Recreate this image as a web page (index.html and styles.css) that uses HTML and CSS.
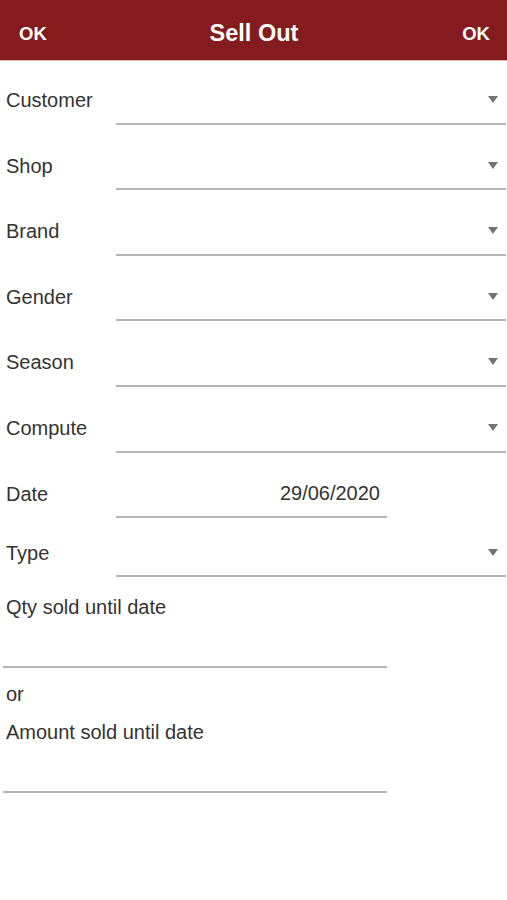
FILE: index.html
```html
<!DOCTYPE html>
<html>
<head>
<meta charset="utf-8">
<link rel="stylesheet" href="styles.css">
</head>
<body>
<header class="topbar">
  <span class="btn">OK</span>
  <span class="title">Sell Out</span>
  <span class="btn">OK</span>
</header>
<main class="form">
  <div class="row"><span class="label">Customer</span><div class="field"><span class="caret"></span></div></div>
  <div class="row"><span class="label">Shop</span><div class="field"><span class="caret"></span></div></div>
  <div class="row"><span class="label">Brand</span><div class="field"><span class="caret"></span></div></div>
  <div class="row"><span class="label">Gender</span><div class="field"><span class="caret"></span></div></div>
  <div class="row"><span class="label">Season</span><div class="field"><span class="caret"></span></div></div>
  <div class="row"><span class="label">Compute</span><div class="field"><span class="caret"></span></div></div>
  <div class="row"><span class="label">Date</span><div class="field date"><span class="value">29/06/2020</span></div></div>
  <div class="row short"><span class="label">Type</span><div class="field"><span class="caret"></span></div></div>
  <div class="block">
    <div class="text first">Qty sold until date</div>
    <div class="input"></div>
    <div class="text">or</div>
    <div class="text">Amount sold until date</div>
    <div class="input"></div>
  </div>
</main>
</body>
</html>
```
FILE: styles.css
```css
html, body {
  margin: 0;
  padding: 0;
  background: #ffffff;
  font-family: "Liberation Sans", Arial, sans-serif;
  color: #333333;
}

.topbar {
  height: 53px;
  padding: 7px 17px 0 19px;
  border-bottom: 1px solid #e2b4b4;
  background: #841c1f;
  color: #ffffff;
  display: flex;
  align-items: center;
  justify-content: space-between;
}

.btn {
  font-size: 18.5px;
  font-weight: bold;
}

.title {
  font-size: 23.5px;
  font-weight: bold;
  margin-right: 1px;
}

.form {
  display: flex;
  flex-direction: column;
}

.row {
  display: flex;
  align-items: flex-end;
  height: 65.6px;
  padding-bottom: 2px;
  box-sizing: border-box;
}

.row.short {
  height: 59px;
}

.label {
  width: 116px;
  flex: none;
  box-sizing: border-box;
  padding-left: 6px;
  font-size: 20px;
  line-height: 24px;
  margin-bottom: 12.5px;
}

.field {
  flex: 1;
  height: 46px;
  border-bottom: 2px solid #b5b5b5;
  margin-right: 1px;
  display: flex;
  align-items: center;
  justify-content: flex-end;
  padding-right: 8px;
}

.caret {
  width: 0;
  height: 0;
  border-left: 5.5px solid transparent;
  border-right: 5.5px solid transparent;
  border-top: 7px solid #737373;
}

.field.date {
  flex: none;
  width: 271px;
  padding-right: 7px;
  box-sizing: border-box;
  height: 48px;
}

.value {
  font-size: 20px;
  line-height: 24px;
  color: #333333;
}

.block {
  display: flex;
  flex-direction: column;
}

.text {
  font-size: 20px;
  line-height: 24px;
  padding-left: 6px;
  margin-top: 14px;
}

.text.first {
  margin-top: 16px;
}

.input {
  width: 384px;
  margin-left: 3px;
  height: 47px;
  border-bottom: 2px solid #b5b5b5;
}
```
